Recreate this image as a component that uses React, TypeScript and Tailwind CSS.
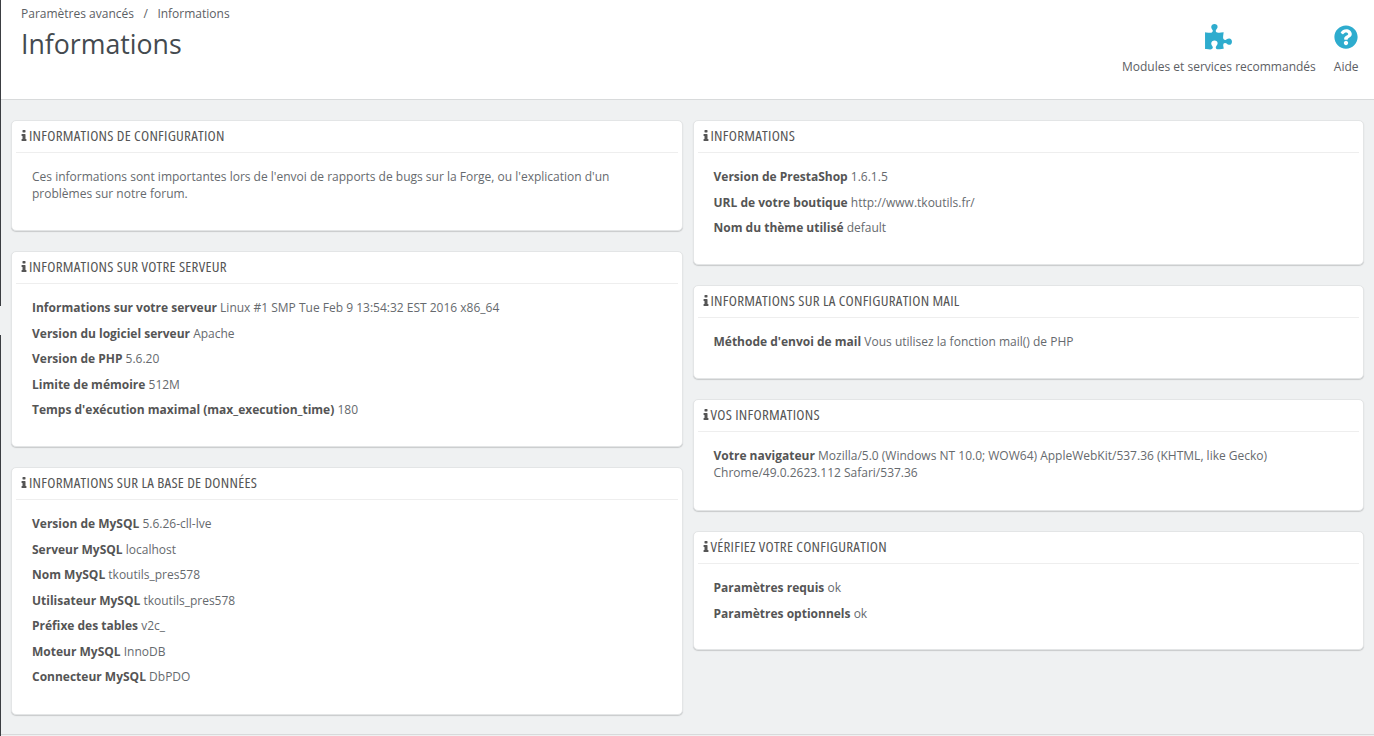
import React from "react";
import { FaQuestionCircle } from "react-icons/fa";

const PUZZLE = "M1664 1098q0 81-44.5 135t-123.5 54q-41 0-77.5-17.5t-59-38-56.5-38-71-17.5q-110 0-110 124 0 39 16 115t15 115v5q-22 0-33 1-34 3-97.5 11.5t-115.5 13.5-98 5q-61 0-103-26.5t-42-83.5q0-37 17.5-71t38-56.5 38-59 17.5-77.5q0-79-54-123.5t-135-44.5q-84 0-143 45.5t-59 127.5q0 43 15 83t33.5 64.5 33.5 53 15 50.5q0 45-46 89-37 35-117 35-95 0-245-24-9-2-27.5-4t-27.5-4l-13-2q-1 0-3-1-2 0-2-1v-1024q2 1 17.5 3.5t34 5 21.5 3.5q150 24 245 24 80 0 117-35 46-44 46-89 0-22-15-50.5t-33.5-53-33.5-64.5-15-83q0-82 59-127.5t144-45.5q80 0 134 44.5t54 123.5q0 41-17.5 77.5t-38 59-38 56.5-17.5 71q0 57 42 83.5t103 26.5q64 0 180-15t163-17v2q-1 2-3.5 17.5t-5 34-3.5 21.5q-24 150-24 245 0 80 35 117 44 46 89 46 22 0 50.5-15t53-33.5 64.5-33.5 83-15q82 0 127.5 59t45.5 143z";
const INFO = "M640 1216v128q0 26-19 45t-45 19h-512q-26 0-45-19t-19-45v-128q0-26 19-45t45-19h64v-384h-64q-26 0-45-19t-19-45v-128q0-26 19-45t45-19h384q26 0 45 19t19 45v576h64q26 0 45 19t19 45zm-128-1152v192q0 26-19 45t-45 19h-256q-26 0-45-19t-19-45v-192q0-26 19-45t45-19h256q26 0 45 19t19 45z";

function Row({ label, value }: { label: string; value: string }) {
  return (
    <p className="mb-[8.4px] leading-[17.14px] text-[#666a6e]">
      <strong className="font-bold text-[#555555]">{label}</strong> {value}
    </p>
  );
}

function Card({ title, className, children }: { title: string; className: string; children: React.ReactNode }) {
  return (
    <section className={`bg-white border border-[#e3e5e6] rounded-[5px] shadow-[0_1px_1px_#c8cacb] px-[4px] ${className}`}>
      <h3 className="flex items-center h-[32px] pb-[2px] border-b border-[#eeeeee] pl-[5px] text-[15px] tracking-[0.27px] font-normal text-[#555555] uppercase [font-stretch:75%]">
        <svg viewBox="0 0 640 1408" className="w-[6px] h-[11px] mr-[2px] fill-[#555555]"><path d={INFO} /></svg>
        {title}
      </h3>
      <div className="px-[16px] pt-[15.1px]">{children}</div>
    </section>
  );
}

export default function App() {
  return (
    <div className="flex h-screen overflow-hidden bg-[#eff1f2] text-[12px] text-[#5c6064] font-['Open_Sans',sans-serif]">
      <div className="w-px shrink-0 flex flex-col">
        <div className="h-[306px] bg-[#3b3e42]" />
        <div className="h-[29px]" />
        <div className="flex-1 bg-[#3b3e42]" />
      </div>
      <div className="flex-1 min-w-0">
        <header className="h-[100px] bg-white border-b border-[#d8dadb] flex justify-between pl-[20px] pr-[15.5px]">
          <div>
            <nav className="pt-[5px] leading-[18px] flex gap-[9.5px]">
              <span>Paramètres avancés</span><span>/</span><span>Informations</span>
            </nav>
            <h1 className="mt-[3px] text-[26.7px] leading-[36px] font-normal text-[#444a4f]">Informations</h1>
          </div>
          <div className="flex gap-[18px] pt-[24px]">
            <div className="flex flex-col items-center">
              <svg viewBox="0 0 1664 1792" className="h-[29px] w-[27px] fill-[#2eacce]"><path d={PUZZLE} /></svg>
              <span className="mt-[5px] leading-[18px]">Modules et services recommandés</span>
            </div>
            <div className="flex flex-col items-center">
              <FaQuestionCircle className="text-[#2eacce] w-[24px] h-[24px] mt-[1px]" />
              <span className="mt-[9px] leading-[18px]">Aide</span>
            </div>
          </div>
        </header>
        <main className="grid grid-cols-2 gap-[10px] pl-[10px] pr-[10px] pt-[20px] h-[635px] border-b border-[#d8dadb]">
          <div className="flex flex-col gap-[20px]">
            <Card title="Informations de configuration" className="h-[111px]">
              <p className="leading-[17.14px] text-[#666a6e]">Ces informations sont importantes lors de l'envoi de rapports de bugs sur la Forge, ou l'explication d'un problèmes sur notre forum.</p>
            </Card>
            <Card title="Informations sur votre serveur" className="h-[196px]">
              <Row label="Informations sur votre serveur" value="Linux #1 SMP Tue Feb 9 13:54:32 EST 2016 x86_64" />
              <Row label="Version du logiciel serveur" value="Apache" />
              <Row label="Version de PHP" value="5.6.20" />
              <Row label="Limite de mémoire" value="512M" />
              <Row label="Temps d'exécution maximal (max_execution_time)" value="180" />
            </Card>
            <Card title="Informations sur la base de données" className="h-[248px]">
              <Row label="Version de MySQL" value="5.6.26-cll-lve" />
              <Row label="Serveur MySQL" value="localhost" />
              <Row label="Nom MySQL" value="tkoutils_pres578" />
              <Row label="Utilisateur MySQL" value="tkoutils_pres578" />
              <Row label="Préfixe des tables" value="v2c_" />
              <Row label="Moteur MySQL" value="InnoDB" />
              <Row label="Connecteur MySQL" value="DbPDO" />
            </Card>
          </div>
          <div className="flex flex-col gap-[20px]">
            <Card title="Informations" className="h-[145px]">
              <Row label="Version de PrestaShop" value="1.6.1.5" />
              <Row label="URL de votre boutique" value="http://www.tkoutils.fr/" />
              <Row label="Nom du thème utilisé" value="default" />
            </Card>
            <Card title="Informations sur la configuration mail" className="h-[94px]">
              <Row label="Méthode d'envoi de mail" value="Vous utilisez la fonction mail() de PHP" />
            </Card>
            <Card title="Vos informations" className="h-[112px]">
              <Row label="Votre navigateur" value="Mozilla/5.0 (Windows NT 10.0; WOW64) AppleWebKit/537.36 (KHTML, like Gecko) Chrome/49.0.2623.112 Safari/537.36" />
            </Card>
            <Card title="Vérifiez votre configuration" className="h-[119px]">
              <Row label="Paramètres requis" value="ok" />
              <Row label="Paramètres optionnels" value="ok" />
            </Card>
          </div>
        </main>
      </div>
    </div>
  );
}
